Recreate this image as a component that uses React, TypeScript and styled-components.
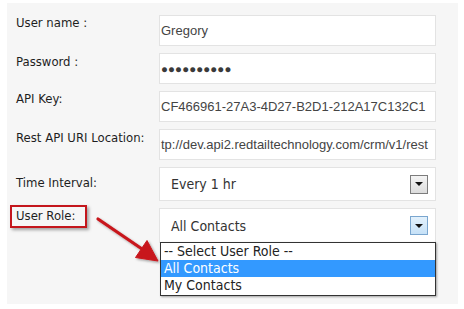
import React from "react";
import styled, { createGlobalStyle } from "styled-components";

const Global = createGlobalStyle`
  html, body { margin: 0; padding: 0; background: #fff; }
  body { width: 464px; height: 309px; overflow: hidden; }
`;

const Page = styled.div`
  position: relative;
  box-sizing: border-box;
  height: 309px;
  padding: 3px 6px 5px 7px;
`;

const Panel = styled.div`
  box-sizing: border-box;
  height: 100%;
  background: #f6f6f6;
  padding: 12px 22px 0 9px;
  display: grid;
  grid-template-columns: 143px 277px;
  row-gap: 7px;
  align-content: start;
`;

const labelFont = `"DejaVu Sans Condensed", "DejaVu Sans", sans-serif`;

const Label = styled.div<{ $offset: number }>`
  font-family: ${labelFont};
  font-size: 13px;
  line-height: 16px;
  color: #1e1e1e;
  padding-top: ${(p) => p.$offset}px;
  white-space: nowrap;
`;

const Marked = styled.span`
  display: inline-block;
  margin: -5px 0 0 -6px;
  padding: 1px 10px 2px 4px;
  border: 2px solid #c4161c;
  box-shadow: 2px 2px 3px rgba(0, 0, 0, 0.35);
`;

const TextBox = styled.div`
  box-sizing: border-box;
  height: 31px;
  border: 1px solid #e3e3e3;
  background: #fff;
  display: flex;
  align-items: center;
  padding: 0 1px 0 1px;
  overflow: hidden;
  white-space: nowrap;
  font-family: "Liberation Sans", Arial, sans-serif;
  font-size: 13px;
  color: #444;
`;

const Dots = styled.span`
  font-family: "Liberation Sans", Arial, sans-serif;
  font-size: 11.5px;
  letter-spacing: 0.1px;
  color: #3a3a3a;
`;

const SelectWrap = styled.div`
  position: relative;
`;

const SelectBox = styled.div<{ $h: number }>`
  box-sizing: border-box;
  height: ${(p) => p.$h}px;
  border: 1px solid #e3e3e3;
  background: #fff;
  display: flex;
  align-items: center;
  justify-content: space-between;
  padding: 0 7px 0 11px;
  font-family: ${labelFont};
  font-size: 14px;
  color: #333;
`;

const ArrowBtn = styled.span<{ $active?: boolean }>`
  box-sizing: border-box;
  width: 18px;
  height: 19px;
  display: flex;
  align-items: center;
  justify-content: center;
  border: 1px solid ${(p) => (p.$active ? "#7aa6cf" : "#7c7c7c")};
  background: ${(p) =>
    p.$active
      ? "linear-gradient(#e3f1fc, #c6e1f7)"
      : "linear-gradient(#f4f4f4, #dcdcdc)"};
  &::after {
    content: "";
    width: 0;
    height: 0;
    border-left: 4px solid transparent;
    border-right: 4px solid transparent;
    border-top: 4px solid #111;
  }
`;

const List = styled.div`
  position: absolute;
  top: calc(100% - 1px);
  left: 1px;
  right: 0;
  box-sizing: border-box;
  border: 1px solid #333;
  background: #fff;
  box-shadow: 1px 1px 2px rgba(0, 0, 0, 0.35);
  padding-bottom: 1px;
  z-index: 2;
`;

const Option = styled.div<{ $selected?: boolean }>`
  height: 17px;
  line-height: 17px;
  padding-left: 3px;
  font-family: ${labelFont};
  font-size: 14px;
  background: ${(p) => (p.$selected ? "#3399ff" : "#fff")};
  color: ${(p) => (p.$selected ? "#fff" : "#222")};
  white-space: nowrap;
`;

const Pointer = styled.svg`
  position: absolute;
  left: 90px;
  top: 210px;
  width: 75px;
  height: 60px;
  pointer-events: none;
  overflow: visible;
`;

export default function App() {
  return (
    <>
      <Global />
      <Page>
        <Panel>
          <Label $offset={0}>User name :</Label>
          <TextBox>Gregory</TextBox>

          <Label $offset={1}>Password :</Label>
          <TextBox>
            <Dots>●●●●●●●●●●</Dots>
          </TextBox>

          <Label $offset={0}>API Key:</Label>
          <TextBox>CF466961-27A3-4D27-B2D1-212A17C132C1</TextBox>

          <Label $offset={1}>Rest API URI Location:</Label>
          <TextBox>tp://dev.api2.redtailtechnology.com/crm/v1/rest</TextBox>

          <Label $offset={8}>Time Interval:</Label>
          <SelectWrap>
            <SelectBox $h={34}>
              <span>Every 1 hr</span>
              <ArrowBtn />
            </SelectBox>
          </SelectWrap>

          <Label $offset={0}>
            <Marked>User Role:</Marked>
          </Label>
          <SelectWrap>
            <SelectBox $h={35}>
              <span>All Contacts</span>
              <ArrowBtn $active />
            </SelectBox>
            <List>
              <Option>-- Select User Role --</Option>
              <Option $selected>All Contacts</Option>
              <Option>My Contacts</Option>
            </List>
          </SelectWrap>
        </Panel>
        <Pointer viewBox="0 0 75 60">
          <defs>
            <filter id="sh" x="-20%" y="-20%" width="150%" height="150%">
              <feDropShadow dx="1.5" dy="1.5" stdDeviation="1.2" floodColor="#000" floodOpacity="0.35" />
            </filter>
          </defs>
          <g filter="url(#sh)" fill="#c8161b" stroke="#c8161b">
            <line x1="8" y1="9" x2="55" y2="41" strokeWidth="3.2" strokeLinecap="round" />
            <polygon points="68,51 45.5,47.5 57,30.5" strokeWidth="1" strokeLinejoin="round" />
          </g>
        </Pointer>
      </Page>
    </>
  );
}
